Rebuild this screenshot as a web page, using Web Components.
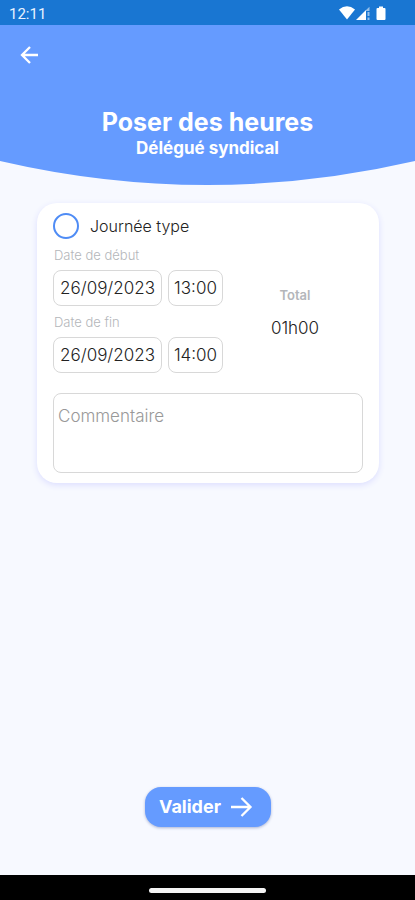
<!DOCTYPE html>
<html lang="fr">
<head>
<meta charset="utf-8">
<meta name="viewport" content="width=device-width, initial-scale=1">
<title>Poser des heures</title>
<style>
  :root {
    --primary: #659bff;
    --status: #1976d2;
    --page: #f7f9ff;
    --muted: #b4b6ba;
    --line: #d8d8d8;
  }

  body {
    margin: 0;
    background: var(--page);
    font-family: Inter, Roboto, sans-serif;
    color: #222;
  }
</style>
</head>
<body>
<hours-app>
  <status-bar slot="status" time="12:11"></status-bar>
  <page-header slot="header">
    Poser des heures
    <span slot="subtitle">Délégué syndical</span>
  </page-header>
  <hours-card>
    <type-option>Journée type</type-option>
    <date-field slot="dates" date="26/09/2023" time="13:00">Date de début</date-field>
    <date-field slot="dates" date="26/09/2023" time="14:00">Date de fin</date-field>
    <total-hours slot="total" value="01h00">Total</total-hours>
    <comment-field slot="comment" label="Commentaire"></comment-field>
  </hours-card>
  <submit-button slot="action">Valider</submit-button>
  <home-bar slot="nav"></home-bar>
</hours-app>

<script>
const render = (element, html) => {
  const template = document.createElement("template");
  template.innerHTML = html;
  const root = element.attachShadow({ mode: "open" });
  root.appendChild(template.content.cloneNode(true));
  return root;
};

class HoursApp extends HTMLElement {
  connectedCallback() {
    render(this, `
      <style>
        :host {
          display: flex;
          flex-direction: column;
          min-height: 100vh;
        }

        main {
          flex: 1;
          display: flex;
          flex-direction: column;
          justify-content: space-between;
          gap: 24px;
          padding: 18px 36px 48px 37px;
        }

        .action {
          display: flex;
          justify-content: center;
        }
      </style>
      <slot name="status"></slot>
      <slot name="header"></slot>
      <main>
        <slot></slot>
        <div class="action"><slot name="action"></slot></div>
      </main>
      <slot name="nav"></slot>
    `);
  }
}

class StatusBar extends HTMLElement {
  connectedCallback() {
    const root = render(this, `
      <style>
        :host {
          display: flex;
          align-items: center;
          justify-content: space-between;
          height: 25px;
          padding: 2px 28px 0 9px;
          box-sizing: border-box;
          background: var(--status);
          color: #e8f2ff;
          font: 400 15px/20px Roboto, sans-serif;
        }

        svg {
          display: block;
        }
      </style>
      <time></time>
      <svg width="48" height="16" viewBox="0 0 48 16" fill="#fff" aria-hidden="true">
        <path d="M0 3.500 Q8 -3 16 3.500 L8 13.500 Z"/>
        <path d="M17 14 L27 4 V14 Z"/>
        <path d="M27 4 L30.500 .8 V5 H27 Z M28.500 6 H30.500 V10 H28.500 Z M28.500 11.500 H30.500 V14 H28.500 Z" opacity=".55"/>
        <path d="M38.500 2 H40 V.6 H44 V2 H45.500 Q46.500 2 46.500 3 V13 Q46.500 14 45.500 14 H38.500 Q37.500 14 37.500 13 V3 Q37.500 2 38.500 2 Z"/>
      </svg>
    `);
    root.querySelector("time").textContent = this.getAttribute("time");
  }
}

class PageHeader extends HTMLElement {
  connectedCallback() {
    render(this, `
      <style>
        :host {
          display: block;
          color: #fff;
          text-align: center;
        }

        header {
          background: var(--primary);
          padding: 18px 16px 3px;
        }

        nav {
          display: flex;
        }

        button {
          display: grid;
          place-items: center;
          width: 24px;
          height: 24px;
          padding: 0;
          border: 0;
          background: none;
          color: inherit;
          cursor: pointer;
        }

        h1 {
          margin: 39px 0 0;
          font-size: 25px;
          line-height: 32px;
          font-weight: 700;
        }

        p {
          margin: 0;
          font-size: 17px;
          line-height: 20px;
          font-weight: 700;
        }

        .curve {
          display: block;
          width: 100%;
          height: 24px;
          fill: var(--primary);
        }
      </style>
      <header>
        <nav>
          <button type="button" aria-label="Retour">
            <svg width="24" height="24" viewBox="0 0 24 24" fill="none" stroke="currentColor" stroke-width="2.300" aria-hidden="true">
              <path d="M22 12 H6.500 M14 4 L6 12 L14 20"/>
            </svg>
          </button>
        </nav>
        <h1><slot></slot></h1>
        <p><slot name="subtitle"></slot></p>
      </header>
      <svg class="curve" viewBox="0 0 100 24" preserveAspectRatio="none" aria-hidden="true">
        <path d="M0 0 H100 Q50 48 0 0 Z"/>
      </svg>
    `);
  }
}

class HoursCard extends HTMLElement {
  connectedCallback() {
    render(this, `
      <style>
        :host {
          display: block;
          padding: 10px 16px;
          border-radius: 20px;
          background: #fff;
          box-shadow: 0 2px 6px #dcdeff;
        }

        .period {
          display: flex;
          align-items: center;
          margin-bottom: 20px;
        }

        .total {
          flex: 1;
          display: flex;
          justify-content: center;
          padding: 14px 0 0 4px;
        }
      </style>
      <slot></slot>
      <div class="period">
        <div><slot name="dates"></slot></div>
        <div class="total"><slot name="total"></slot></div>
      </div>
      <slot name="comment"></slot>
    `);
  }
}

class TypeOption extends HTMLElement {
  connectedCallback() {
    render(this, `
      <style>
        :host {
          display: block;
        }

        label {
          display: flex;
          align-items: center;
          gap: 11px;
          font-size: 16px;
          line-height: 26px;
          font-weight: 300;
        }

        input {
          appearance: none;
          width: 26px;
          height: 26px;
          margin: 0;
          border: 2px solid #4f8cf5;
          border-radius: 50%;
        }

        input:checked {
          background: var(--primary);
        }
      </style>
      <label><input type="radio" name="type"><slot></slot></label>
    `);
  }
}

class DateField extends HTMLElement {
  connectedCallback() {
    const root = render(this, `
      <style>
        :host {
          display: block;
        }

        label {
          display: block;
          padding: 7px 1px 6px;
          font-size: 13px;
          line-height: 18px;
          font-weight: 300;
          color: var(--muted);
        }

        .row {
          display: flex;
          gap: 6px;
        }

        input {
          box-sizing: border-box;
          height: 36px;
          padding: 0;
          border: 1px solid var(--line);
          border-radius: 8px;
          background: #fff;
          color: inherit;
          font: 300 17px/24px Inter, sans-serif;
          text-align: center;
        }

        .date {
          width: 109px;
        }

        .time {
          width: 55px;
        }
      </style>
      <label for="date"><slot></slot></label>
      <div class="row">
        <input class="date" id="date" type="text">
        <input class="time" type="text" aria-label="Heure">
      </div>
    `);
    root.querySelector(".date").value = this.getAttribute("date");
    root.querySelector(".time").value = this.getAttribute("time");
  }
}

class TotalHours extends HTMLElement {
  connectedCallback() {
    const root = render(this, `
      <style>
        :host {
          display: flex;
          flex-direction: column;
          align-items: center;
          gap: 12px;
        }

        span {
          font-size: 13px;
          line-height: 18px;
          font-weight: 600;
          color: var(--muted);
        }

        output {
          font-size: 17px;
          line-height: 24px;
          font-weight: 300;
        }
      </style>
      <span><slot></slot></span>
      <output></output>
    `);
    root.querySelector("output").textContent = this.getAttribute("value");
  }
}

class CommentField extends HTMLElement {
  connectedCallback() {
    const root = render(this, `
      <style>
        :host {
          display: block;
        }

        textarea {
          display: block;
          box-sizing: border-box;
          width: 100%;
          height: 80px;
          padding: 10px 4px;
          border: 1px solid var(--line);
          border-radius: 8px;
          resize: none;
          color: inherit;
          font: 300 17px/24px Inter, sans-serif;
        }

        textarea::placeholder {
          color: #999;
        }
      </style>
      <textarea></textarea>
    `);
    const textarea = root.querySelector("textarea");
    textarea.placeholder = this.getAttribute("label");
    textarea.setAttribute("aria-label", this.getAttribute("label"));
  }
}

class SubmitButton extends HTMLElement {
  connectedCallback() {
    render(this, `
      <style>
        :host {
          display: block;
        }

        button {
          display: flex;
          align-items: center;
          gap: 6px;
          height: 40px;
          padding: 0 18px 0 14px;
          border: 0;
          border-radius: 16px;
          background: var(--primary);
          box-shadow: 0 1px 3px #aab4d4;
          color: #fff;
          font: 700 18px/24px Inter, sans-serif;
          cursor: pointer;
        }
      </style>
      <button type="button">
        <slot></slot>
        <svg width="26" height="24" viewBox="0 0 26 24" fill="none" stroke="currentColor" stroke-width="2.300" aria-hidden="true">
          <path d="M4 12 H23.500 M14.500 3 L23.500 12 L14.500 21"/>
        </svg>
      </button>
    `);
  }
}

class HomeBar extends HTMLElement {
  connectedCallback() {
    render(this, `
      <style>
        :host {
          display: flex;
          justify-content: center;
          align-items: center;
          height: 25px;
          padding-top: 5px;
          box-sizing: border-box;
          background: #000;
        }

        div {
          width: 28%;
          height: 5px;
          border-radius: 3px;
          background: #f4f4f4;
        }
      </style>
      <div></div>
    `);
  }
}

customElements.define("hours-app", HoursApp);
customElements.define("status-bar", StatusBar);
customElements.define("page-header", PageHeader);
customElements.define("hours-card", HoursCard);
customElements.define("type-option", TypeOption);
customElements.define("date-field", DateField);
customElements.define("total-hours", TotalHours);
customElements.define("comment-field", CommentField);
customElements.define("submit-button", SubmitButton);
customElements.define("home-bar", HomeBar);
</script>
</body>
</html>
